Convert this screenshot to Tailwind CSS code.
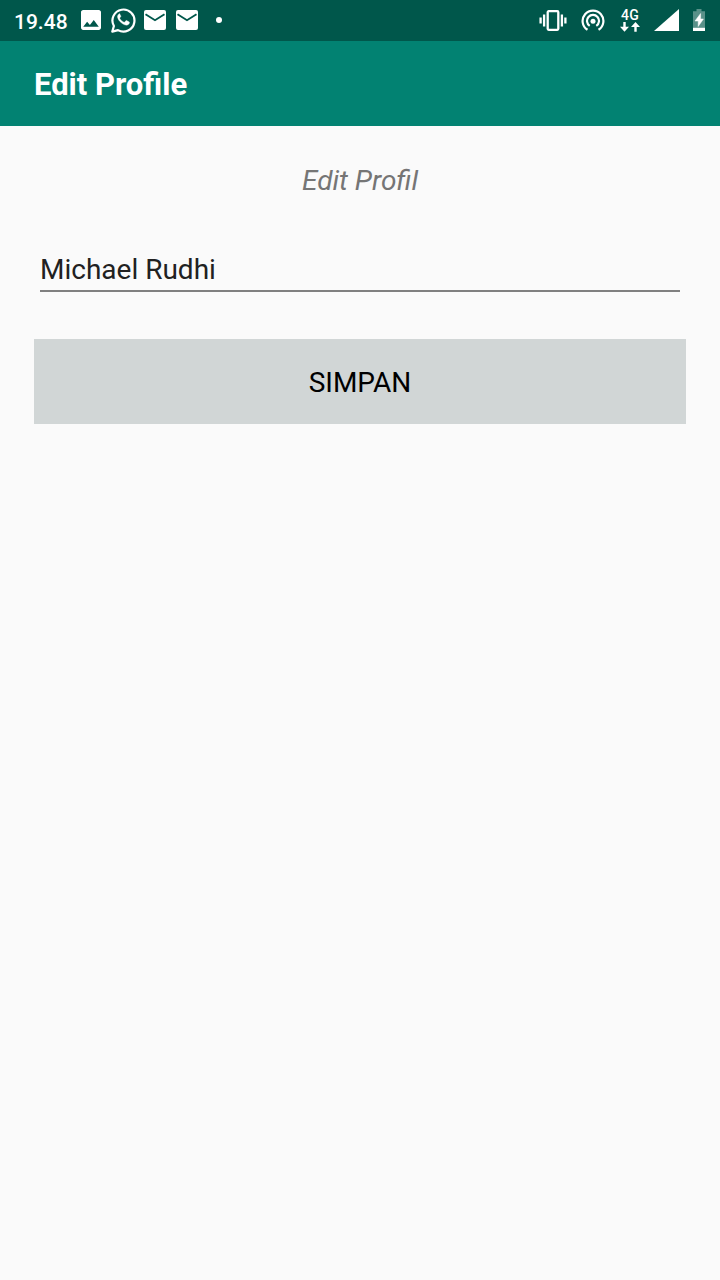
<!DOCTYPE html>
<html lang="id">
<head>
<meta charset="utf-8">
<meta name="viewport" content="width=device-width, initial-scale=1">
<title>Edit Profile</title>
<script src="https://cdn.jsdelivr.net/npm/@tailwindcss/browser@4"></script>
</head>
<body class="min-h-screen bg-[#fafafa] font-[Roboto,sans-serif] text-[28px]">
  <!-- Status bar -->
  <div class="flex h-[41px] items-center justify-between bg-[#00574b] pr-[15px] pb-px pl-[14px] text-white">
    <div class="flex items-center">
      <span class="w-[67px] pt-[3px] text-[21px] leading-6 font-medium">19.48</span>
      <svg class="h-5 w-5" viewBox="3 3 18 18" fill="currentColor" aria-hidden="true"><path d="M21 19V5c0-1.100-.9-2-2-2H5c-1.100 0-2 .9-2 2v14c0 1.100.9 2 2 2h14c1.100 0 2-.9 2-2zM8.500 13.500l2.500 3.010L14.500 12l4.500 6H5l3.500-4.500z"/></svg>
      <svg class="ml-[10px] h-[26px] w-[25px]" viewBox="0 0 25 26" fill="none" aria-hidden="true">
        <path d="M2.900 19 1.300 24.600 7 23.100A11 11 0 1 0 2.900 19Z" stroke="currentColor" stroke-width="2.200" stroke-linejoin="round"/>
        <path d="M9 6.900c-.5-.1-1.100 0-1.500.5-.9.900-1.200 2-.8 3.300.6 1.900 1.800 3.600 3.400 4.900 1.500 1.300 3.300 2.300 4.900 2.500 1.400.2 2.900-.6 3.300-1.800.2-.6.2-1.200-.1-1.400l-2.600-1.300c-.4-.1-.7 0-.9.300l-.9 1.200c-.2.300-.6.300-.9.100-1.800-.8-3.100-2-4.100-3.700-.1-.3-.1-.5.1-.8l.8-1c.2-.3.200-.5.100-.8L8.900 7.200Z" fill="currentColor" stroke="currentColor" stroke-width=".4"/>
      </svg>
      <svg class="ml-2 h-5 w-[22px]" viewBox="0 0 22 20" aria-hidden="true"><rect width="22" height="20" rx="2" fill="currentColor"/><path d="m1.500 4.200 9.500 6 9.500-6" fill="none" stroke="#00574b" stroke-width="1.900"/></svg>
      <svg class="ml-[10px] h-5 w-[22px]" viewBox="0 0 22 20" aria-hidden="true"><rect width="22" height="20" rx="2" fill="currentColor"/><path d="m1.500 4.200 9.500 6 9.500-6" fill="none" stroke="#00574b" stroke-width="1.900"/></svg>
      <span class="ml-[18px] h-[6px] w-[6px] rounded-full bg-white"></span>
    </div>
    <div class="flex items-center">
      <svg class="h-[22px] w-7" viewBox="0 0 28 22" fill="none" stroke="currentColor" stroke-width="2.300" aria-hidden="true"><rect x="8.700" y="2.200" width="10.600" height="18.600" rx="1"/><path d="M1.600 8.500v6M5.100 5.500v12M22.900 5.500v12M26.400 8.500v6"/></svg>
      <svg class="ml-[14px] h-[22px] w-6" viewBox="0 0 24 22" fill="none" stroke="currentColor" stroke-width="2.200" aria-hidden="true"><path d="M6.500 20.800a10.400 10.400 0 1 1 11 0M8.700 16.900a6 6 0 1 1 6.600 0"/><circle cx="12" cy="12.300" r="2.500" fill="currentColor" stroke="none"/></svg>
      <div class="ml-[15px] flex w-5 flex-col items-center">
        <span class="text-[14px] leading-[13px] font-medium tracking-wide">4G</span>
        <svg class="h-[10px] w-5" viewBox="0 0 20 10" aria-hidden="true"><path d="M3.300 0h2.400v4.800H9L4.500 9.700 0 4.800h3.300ZM15.500 0 20 4.900h-3.300v4.800h-2.400V4.900H11Z" fill="currentColor"/></svg>
      </div>
      <svg class="ml-[14px] h-[22px] w-[25px]" viewBox="0 0 25 22" aria-hidden="true"><path d="M0 22 25 0v22Z" fill="currentColor"/></svg>
      <svg class="ml-[14px] h-[22px] w-3" viewBox="0 0 12 22" aria-hidden="true"><path d="M3.500 0h5v2.200H12V19H0V2.200h3.500Z" fill="#fff" fill-opacity=".35"/><path d="M0 18.800h12V22H0Z" fill="currentColor"/><path d="M7.600 4.500 2 12h3.200v5.500L10.400 10H7.600Z" fill="currentColor" stroke="currentColor" stroke-width=".5"/></svg>
    </div>
  </div>

  <header class="flex h-[85px] items-center bg-[#028272] px-[34px]">
    <h1 class="pt-[2px] text-[31px] leading-9 font-bold text-white">Edit Profile</h1>
  </header>

  <main class="px-[34px] pt-[39px]">
    <h2 class="text-center leading-8 text-[#757575] italic">Edit Profil</h2>
    <form class="mt-[49px]">
      <div class="px-[6px]">
        <input type="text" name="nama" aria-label="Nama" value="Michael Rudhi" class="block h-[46px] w-full border-b-2 border-[#808080] bg-transparent pt-[2px] text-[#212121] outline-none">
      </div>
      <button type="button" class="mt-[47px] block h-[85px] w-full bg-[#d1d6d6] pt-[2px] text-black">SIMPAN</button>
    </form>
  </main>
</body>
</html>
